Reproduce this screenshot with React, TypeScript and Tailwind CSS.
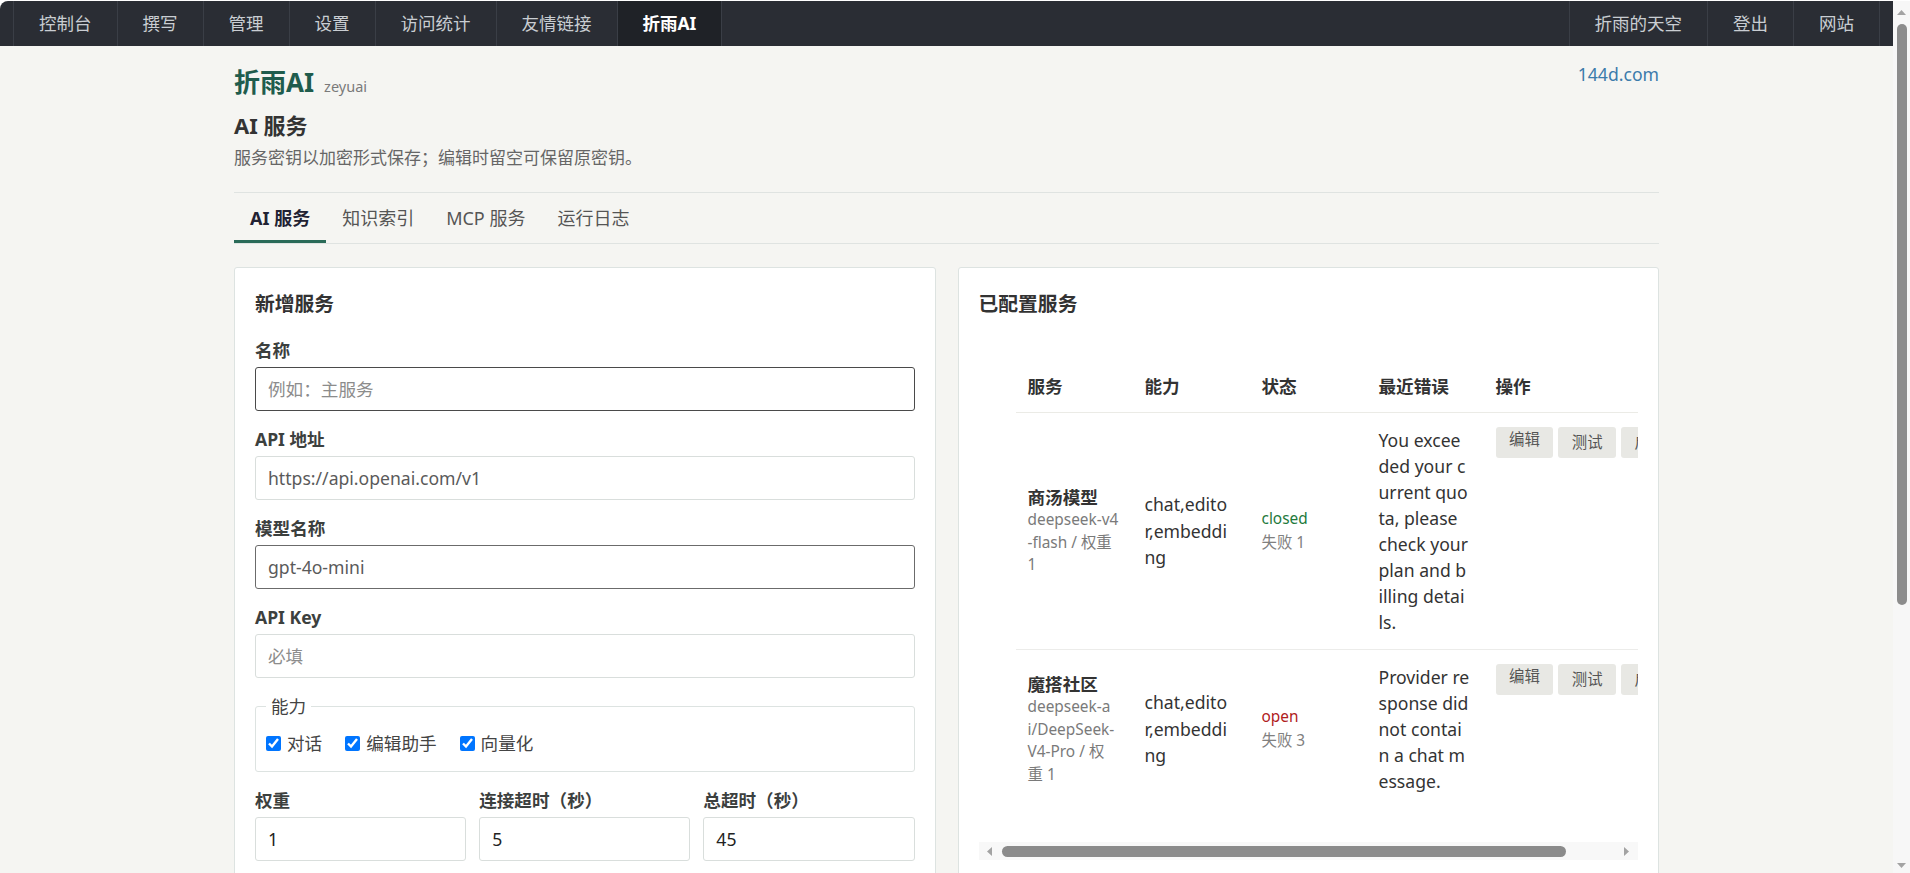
import React from "react";

const leftNav = ["控制台", "撰写", "管理", "设置", "访问统计", "友情链接", "折雨AI"];
const rightNav = ["折雨的天空", "登出", "网站"];
const tabs = ["AI 服务", "知识索引", "MCP 服务", "运行日志"];

const services = [
  {
    name: "商汤模型",
    meta: ["deepseek-v4", "-flash / 权重", "1"],
    caps: ["chat,edito", "r,embeddi", "ng"],
    status: "closed",
    fails: 1,
    error: ["You excee", "ded your c", "urrent quo", "ta, please", "check your", "plan and b", "illing detai", "ls."],
  },
  {
    name: "魔搭社区",
    meta: ["deepseek-a", "i/DeepSeek-", "V4-Pro / 权", "重 1"],
    caps: ["chat,edito", "r,embeddi", "ng"],
    status: "open",
    fails: 3,
    error: ["Provider re", "sponse did", "not contai", "n a chat m", "essage."],
  },
];

function TopBar() {
  return (
    <div className="flex h-[45px] shrink-0 justify-between bg-[#2a2d34] px-[13px] text-[17.5px] text-[#c9cdd2]">
      <div className="flex border-l border-[#3a3e46]">
        {leftNav.map((item) => (
          <span
            key={item}
            className={`flex items-center border-r border-[#3a3e46] px-[25px] ${
              item === "折雨AI" ? "bg-[#1f2227] font-bold text-white" : ""
            }`}
          >
            {item}
          </span>
        ))}
      </div>
      <div className="flex border-l border-[#3a3e46]">
        {rightNav.map((item) => (
          <span key={item} className="flex items-center border-r border-[#3a3e46] px-[25px]">
            {item}
          </span>
        ))}
      </div>
    </div>
  );
}

function Field({
  label,
  placeholder,
  value,
  tone = "light",
}: {
  label: string;
  placeholder?: string;
  value?: string;
  tone?: "light" | "dark" | "focus";
}) {
  const border =
    tone === "focus" ? "border-[#4a4a4a]" : tone === "dark" ? "border-[#6b6b6b]" : "border-[#d9dedc]";
  return (
    <div className="mb-[16px] flex flex-col">
      <label className="mb-[5px] text-[17.6px] font-bold leading-[24px] text-[#3c403e]">{label}</label>
      <input
        className={`h-[44px] rounded-[3px] border ${border} bg-white px-[12px] text-[17.6px] text-[#5a5a5a] outline-none placeholder:text-[#8c8c8c]`}
        placeholder={placeholder}
        defaultValue={value}
      />
    </div>
  );
}

function SmallField({ label, value }: { label: string; value: string }) {
  return (
    <div className="flex flex-col">
      <label className="mb-[5px] text-[17.6px] font-bold leading-[24px] text-[#3c403e]">{label}</label>
      <input
        className="h-[44px] w-full rounded-[3px] border border-[#d9dedc] bg-white px-[12px] text-[17.6px] text-[#222] outline-none"
        defaultValue={value}
      />
    </div>
  );
}

function Arrow({ dir }: { dir: "up" | "down" | "left" | "right" }) {
  const pts = {
    up: "0,5 4.5,0 9,5",
    down: "0,0 9,0 4.5,5",
    left: "5,0 5,9 0,4.5",
    right: "0,0 0,9 5,4.5",
  }[dir];
  const vertical = dir === "up" || dir === "down";
  return (
    <svg width={vertical ? 9 : 5} height={vertical ? 5 : 9} viewBox={vertical ? "0 0 9 5" : "0 0 5 9"}>
      <polygon points={pts} fill="#a3a3a3" />
    </svg>
  );
}

function NewServiceCard() {
  return (
    <div className="rounded-[3px] border border-[#dde3e1] bg-white px-[20px] pt-[22px] pb-[20px]">
      <h2 className="mb-[20px] text-[19.8px] font-bold leading-[28px] text-[#333]">新增服务</h2>
      <Field label="名称" placeholder="例如：主服务" tone="focus" />
      <Field label="API 地址" value="https://api.openai.com/v1" />
      <Field label="模型名称" value="gpt-4o-mini" tone="dark" />
      <Field label="API Key" placeholder="必填" />
      <fieldset className="rounded-[3px] border border-[#dde3e1] px-[10px] pt-[13px] pb-[16px]">
        <legend className="px-[5px] text-[17.6px] leading-[24px] text-[#444]">能力</legend>
        <div className="flex items-center gap-[23px] text-[17.6px] leading-[24px] text-[#444]">
          {["对话", "编辑助手", "向量化"].map((c) => (
            <label key={c} className="flex items-center gap-[6px]">
              <input type="checkbox" defaultChecked className="m-0 h-[15px] w-[15px] accent-[#0075ff]" />
              {c}
            </label>
          ))}
        </div>
      </fieldset>
      <div className="mt-[16px] grid grid-cols-3 gap-[13px]">
        <SmallField label="权重" value="1" />
        <SmallField label="连接超时（秒）" value="5" />
        <SmallField label="总超时（秒）" value="45" />
      </div>
    </div>
  );
}

function ServicesCard() {
  return (
    <div className="rounded-[3px] border border-[#dde3e1] bg-white px-[20px] pt-[22px] pb-[20px]">
      <h2 className="mb-[20px] text-[19.8px] font-bold leading-[28px] text-[#333]">已配置服务</h2>
      <div className="overflow-hidden pt-[22px] pb-[34px] pl-[37px]">
        <table className="w-[741px] table-fixed border-collapse text-left">
          <colgroup>
            <col className="w-[117px]" />
            <col className="w-[117px]" />
            <col className="w-[117px]" />
            <col className="w-[117px]" />
            <col className="w-[273px]" />
          </colgroup>
          <thead>
            <tr className="border-b border-[#ebebe6]">
              {["服务", "能力", "状态", "最近错误", "操作"].map((h) => (
                <th key={h} className="px-[12px] py-[14px] text-[17.6px] font-bold leading-[24px] text-[#333]">
                  {h}
                </th>
              ))}
            </tr>
          </thead>
          <tbody>
            {services.map((s, i) => (
              <tr key={s.name} className={i > 0 ? "border-t border-[#ececea]" : ""}>
                <td className="px-[12px] py-[14px] align-middle whitespace-nowrap">
                  <div className="text-[17.6px] font-bold leading-[24px] text-[#333]">{s.name}</div>
                  {s.meta.map((m) => (
                    <div key={m} className="text-[15.4px] leading-[22.5px] text-[#7a7a7a]">
                      {m}
                    </div>
                  ))}
                </td>
                <td className="px-[12px] py-[14px] align-middle whitespace-nowrap">
                  {s.caps.map((c) => (
                    <div key={c} className="text-[17.6px] leading-[26.5px] text-[#333]">
                      {c}
                    </div>
                  ))}
                </td>
                <td className="px-[12px] py-[14px] align-middle whitespace-nowrap">
                  <div
                    className={`text-[15.4px] leading-[24px] ${
                      s.status === "closed" ? "text-[#1e7a3c]" : "text-[#b0201c]"
                    }`}
                  >
                    {s.status}
                  </div>
                  <div className="text-[15.4px] leading-[24px] text-[#808080]">失败 {s.fails}</div>
                </td>
                <td className="px-[12px] py-[14px] align-middle whitespace-nowrap">
                  {s.error.map((e) => (
                    <div key={e} className="text-[17.6px] leading-[26px] text-[#333]">
                      {e}
                    </div>
                  ))}
                </td>
                <td className="px-[12px] py-[14px] align-top whitespace-nowrap">
                  <div className="flex gap-[5px]">
                    {["编辑", "测试", "启用", "删除"].map((b, j) => (
                      <button
                        key={b}
                        className={`h-[31px] rounded-[3px] bg-[#e8e8e4] px-[13.5px] text-[15.4px] text-[#555] ${
                          j === 0 ? "pb-[5px]" : "pt-[1px]"
                        }`}
                      >
                        {b}
                      </button>
                    ))}
                  </div>
                </td>
              </tr>
            ))}
          </tbody>
        </table>
      </div>
      <div className="flex h-[18px] items-center bg-[#f8f8f8]">
        <div className="flex w-[22px] justify-center">
          <Arrow dir="left" />
        </div>
        <div className="ml-[1px] h-[11px] w-[564px] rounded-full bg-[#8b8b8b]" />
        <div className="flex-1" />
        <div className="flex w-[23px] justify-center">
          <Arrow dir="right" />
        </div>
      </div>
    </div>
  );
}

export default function App() {
  return (
    <div className="flex h-[873px] overflow-hidden bg-white pt-px font-['Noto_Sans','Noto_Sans_CJK_SC',sans-serif]">
      <div className="flex min-w-0 flex-1 flex-col overflow-hidden rounded-tl-[8px] bg-[#f5f5f2]">
        <TopBar />
        <main className="mx-auto w-full max-w-[1425px] pt-[16px]">
          <div className="flex items-start justify-between">
            <div className="flex items-baseline gap-[10px]">
              <span className="text-[26px] font-bold leading-[40px] text-[#1f5c4d]">折雨AI</span>
              <span className="text-[14.5px] text-[#7a7a7a]">zeyuai</span>
            </div>
            <a className="text-[17.6px] leading-[24px] text-[#3b7bab]">144d.com</a>
          </div>
          <h1 className="mt-[8px] text-[22px] font-bold leading-[30px] text-[#333]">AI 服务</h1>
          <p className="mt-[5px] text-[17px] leading-[26px] text-[#666]">
            服务密钥以加密形式保存；编辑时留空可保留原密钥。
          </p>
          <nav className="mt-[21px] flex border-y border-[#dfe3e1]">
            {tabs.map((t, i) => (
              <span
                key={t}
                className={`flex h-[50px] items-center px-[16px] text-[18px] ${
                  i === 0
                    ? "border-b-[3px] border-[#2a6b58] pt-[3px] font-bold text-[#223]"
                    : "text-[#555]"
                }`}
              >
                {t}
              </span>
            ))}
          </nav>
          <div className="mt-[23px] grid grid-cols-2 gap-[22px]">
            <NewServiceCard />
            <ServicesCard />
          </div>
        </main>
      </div>
      <div className="flex w-[17px] shrink-0 flex-col items-center bg-[#f7f7f7]">
        <div className="mt-[9px]">
          <Arrow dir="up" />
        </div>
        <div className="mt-[9px] h-[581px] w-[10px] rounded-full bg-[#8c8c8c]" />
        <div className="flex-1" />
        <div className="mb-[5px]">
          <Arrow dir="down" />
        </div>
      </div>
    </div>
  );
}
